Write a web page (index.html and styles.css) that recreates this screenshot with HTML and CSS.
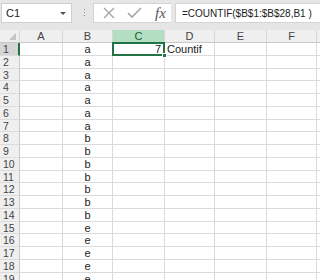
FILE: index.html
```html
<!DOCTYPE html>
<html lang="en">

<head>
    <meta charset="UTF-8">
    <title>Countif</title>
    <link rel="stylesheet" href="styles.css">
</head>

<body>
    <div class="toolbar">
        <div class="namebox">
            <span>C1</span>
            <span class="arrow"></span>
        </div>
        <div class="dots"><i></i><i></i><i></i></div>
        <div class="fbuttons">
            <svg class="icon" width="14" height="14" viewBox="0 0 14 14">
                <path d="M2 2 L12 12 M12 2 L2 12" stroke="#a6a6a6" stroke-width="1.4" fill="none" />
            </svg>
            <svg class="icon" width="15" height="14" viewBox="0 0 15 14">
                <path d="M1 7 L5 11 L14 2" stroke="#a6a6a6" stroke-width="1.6" fill="none" />
            </svg>
            <span class="fx">fx</span>
        </div>
        <div class="formula">=COUNTIF($B$1:$B$28,B1 )</div>
    </div>

    <div class="sheet">
        <div class="corner"><span class="tri"></span></div>
        <div class="colhead">A</div>
        <div class="colhead">B</div>
        <div class="colhead sel">C</div>
        <div class="colhead">D</div>
        <div class="colhead">E</div>
        <div class="colhead">F</div>
        <div class="colhead last"></div>

        <div class="rowhead sel">1</div>
        <div class="cell"></div>
        <div class="cell mid">a</div>
        <div class="cell num active">7<span class="handle"></span></div>
        <div class="cell">Countif</div>
        <div class="cell"></div>
        <div class="cell"></div>
        <div class="cell last"></div>
    </div>

    <script>
        var values = ["a", "a", "a", "a", "a", "a", "b", "b", "b", "b", "b", "b", "b", "e", "e", "e", "e", "e"];
        var sheet = document.querySelector(".sheet");
        for (var i = 0; i < values.length; i++) {
            var html = '<div class="rowhead">' + (i + 2) + '</div>' +
                '<div class="cell"></div>' +
                '<div class="cell mid">' + values[i] + '</div>' +
                '<div class="cell"></div><div class="cell"></div><div class="cell"></div><div class="cell"></div>' +
                '<div class="cell last"></div>';
            sheet.insertAdjacentHTML("beforeend", html);
        }
    </script>
</body>

</html>
```

FILE: styles.css
```css
* {
    box-sizing: border-box;
}

body {
    margin: 0;
    font-family: 'Liberation Sans', Arial, sans-serif;
    font-size: 11px;
    color: #222;
    background: #ffffff;
    overflow: hidden;
}

.toolbar {
    display: flex;
    align-items: flex-start;
    height: 30px;
    padding: 3px 0 0 1px;
    background-color: #e6e6e6;
}

.namebox {
    display: flex;
    align-items: center;
    justify-content: space-between;
    width: 71px;
    height: 20px;
    padding: 0 5px 0 4px;
    background: #fff;
    border: 1px solid #cfcfcf;
}

.arrow {
    width: 0;
    height: 0;
    border-left: 3px solid transparent;
    border-right: 3px solid transparent;
    border-top: 3px solid #555;
}

.dots {
    display: flex;
    flex-direction: column;
    gap: 2px;
    margin: 6px 0 0 12px;
}

.dots i {
    display: block;
    width: 1px;
    height: 1px;
    background: #8a8a8a;
}

.fbuttons {
    display: flex;
    align-items: center;
    gap: 11px;
    width: 78px;
    height: 20px;
    margin-left: 8px;
    padding-left: 8px;
    background: #fff;
    border: 1px solid #d4d4d4;
    border-right: none;
}

.icon {
    display: block;
}

.fx {
    font-family: 'Liberation Serif', 'Times New Roman', serif;
    font-style: italic;
    font-size: 15px;
    color: #555;
    margin-left: 2px;
}

.formula {
    flex: 1;
    min-width: 0;
    height: 20px;
    margin-left: 4px;
    padding: 4px 0 0 6px;
    background: #fff;
    border: 1px solid #d4d4d4;
    border-right: none;
    font-size: 10px;
    white-space: nowrap;
    overflow: hidden;
}

.sheet {
    display: grid;
    grid-template-columns: 20px 43px 50px 52px 50px 52px 50px 1fr;
    grid-template-rows: 13px;
    grid-auto-rows: 12.75px;
}

.corner,
.colhead {
    background: #efefef;
    border-right: 1px solid #d6d6d6;
    border-bottom: 1px solid #c8c8c8;
    text-align: center;
    line-height: 12px;
    color: #444;
}

.corner {
    position: relative;
}

.tri {
    position: absolute;
    right: 3px;
    bottom: 2px;
    width: 0;
    height: 0;
    border-left: 7px solid transparent;
    border-bottom: 7px solid #c4c4c4;
}

.colhead.sel {
    background: #b2dec2;
    color: #1d5c35;
    border-bottom: 1px solid #217346;
}

.colhead.last,
.cell.last {
    border-right: none;
}

.rowhead {
    background: #efefef;
    border-right: 1px solid #c8c8c8;
    border-bottom: 1px solid #dcdcdc;
    padding-left: 3px;
    line-height: 12px;
    color: #444;
    font-size: 10.5px;
}

.rowhead.sel {
    background: #d6d6d6;
    border-right: 2px solid #217346;
}

.cell {
    border-right: 1px solid #dadada;
    border-bottom: 1px solid #dadada;
    line-height: 12px;
    padding: 0 2px;
    white-space: nowrap;
}

.cell.mid {
    text-align: center;
}

.cell.num {
    text-align: right;
}

.cell.active {
    position: relative;
    border: 2px solid #217346;
    margin: -1px 0 0 -1px;
    line-height: 11px;
}

.handle {
    position: absolute;
    right: -4px;
    bottom: -4px;
    width: 5px;
    height: 5px;
    background: #217346;
    border: 1px solid #fff;
}
```
